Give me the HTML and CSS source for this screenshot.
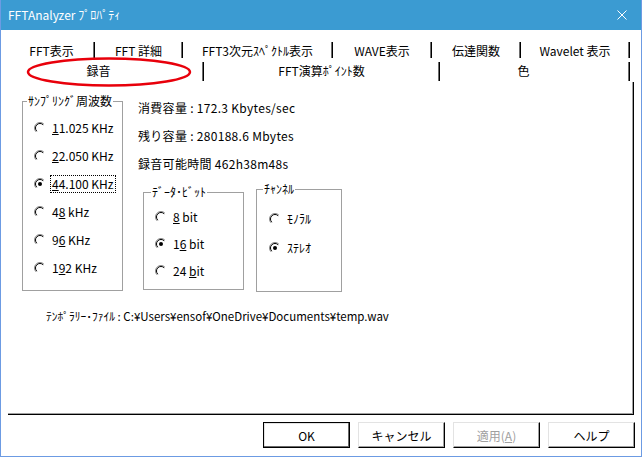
FILE: index.html
```html
<!DOCTYPE html>
<html lang="ja">
<head>
  <meta charset="UTF-8">
  <title>FFTAnalyzer ﾌﾟﾛﾊﾟﾃｨ</title>
  <link rel="stylesheet" href="styles.css">
</head>
<body>
  <svg class="defs">
    <symbol id="radio" viewBox="0 0 12 12">
      <path d="M2.1 9.9A5.5 5.5 0 0 1 9.9 2.1" stroke="#8a8a8a" fill="none"/>
      <path d="M2.8 9.2A4.5 4.5 0 0 1 9.2 2.8" stroke="#000" fill="none"/>
    </symbol>
    <symbol id="radio-on" viewBox="0 0 12 12">
      <path d="M2.1 9.9A5.5 5.5 0 0 1 9.9 2.1" stroke="#8a8a8a" fill="none"/>
      <path d="M2.8 9.2A4.5 4.5 0 0 1 9.2 2.8" stroke="#000" fill="none"/>
      <circle cx="6" cy="6" r="2" fill="#000"/>
    </symbol>
  </svg>

  <div class="window">
    <div class="titlebar">
      <span>FFTAnalyzer ﾌﾟﾛﾊﾟﾃｨ</span>
      <svg class="close" viewBox="0 0 10 10"><path d="M0.5 0.5L9.5 9.5M9.5 0.5L0.5 9.5" stroke="#fff"/></svg>
    </div>

    <!-- タブ 2段 -->
    <div class="tabs">
      <div class="tab-row row-back">
        <div class="tab w-fft">FFT表示</div>
        <div class="tab w-detail">FFT 詳細</div>
        <div class="tab w-3d">FFT3次元ｽﾍﾟｸﾄﾙ表示</div>
        <div class="tab w-wave">WAVE表示</div>
        <div class="tab w-trans">伝達関数</div>
        <div class="tab w-wavelet">Wavelet 表示</div>
      </div>
      <div class="tab-row row-front">
        <div class="tab w-rec">録音</div>
        <div class="tab w-points">FFT演算ﾎﾟｲﾝﾄ数</div>
        <div class="tab w-color">色</div>
      </div>
    </div>

    <div class="sheet">
      <div class="sheet-main">
        <fieldset class="group rate">
          <legend>ｻﾝﾌﾟﾘﾝｸﾞ周波数</legend>
          <div class="options">
            <div class="opt"><svg><use href="#radio"/></svg><span><u>1</u>1.025 KHz</span></div>
            <div class="opt"><svg><use href="#radio"/></svg><span><u>2</u>2.050 KHz</span></div>
            <div class="opt"><svg><use href="#radio-on"/></svg><span class="focus"><u>4</u>4.100 KHz</span></div>
            <div class="opt"><svg><use href="#radio"/></svg><span>4<u>8</u> kHz</span></div>
            <div class="opt"><svg><use href="#radio"/></svg><span>9<u>6</u> KHz</span></div>
            <div class="opt"><svg><use href="#radio"/></svg><span>1<u>9</u>2 KHz</span></div>
          </div>
        </fieldset>

        <div class="info">
          <p>消費容量 : 172.3 Kbytes/sec</p>
          <p>残り容量 : 280188.6 Mbytes</p>
          <p>録音可能時間 462h38m48s</p>
          <div class="subgroups">
            <fieldset class="group bits">
              <legend>ﾃﾞｰﾀ･ﾋﾞｯﾄ</legend>
              <div class="options">
                <div class="opt"><svg><use href="#radio"/></svg><span><u>8</u> bit</span></div>
                <div class="opt"><svg><use href="#radio-on"/></svg><span>1<u>6</u> bit</span></div>
                <div class="opt"><svg><use href="#radio"/></svg><span>24 <u>b</u>it</span></div>
              </div>
            </fieldset>
            <fieldset class="group chan">
              <legend>ﾁｬﾝﾈﾙ</legend>
              <div class="options">
                <div class="opt"><svg><use href="#radio"/></svg><span>ﾓﾉﾗﾙ</span></div>
                <div class="opt"><svg><use href="#radio-on"/></svg><span>ｽﾃﾚｵ</span></div>
              </div>
            </fieldset>
          </div>
        </div>
      </div>
      <p class="temp">ﾃﾝﾎﾟﾗﾘｰ･ﾌｧｲﾙ : C:¥Users¥ensof¥OneDrive¥Documents¥temp.wav</p>
    </div>

    <div class="buttons">
      <div class="btn default">OK</div>
      <div class="btn">キャンセル</div>
      <div class="btn disabled">適用(<u>A</u>)</div>
      <div class="btn">ヘルプ</div>
    </div>

    <!-- 赤丸 (注釈) -->
    <svg class="mark" viewBox="0 0 168 32"><ellipse cx="84" cy="16" rx="81" ry="13.5" fill="none" stroke="#e8000b" stroke-width="2.5"/></svg>
  </div>
</body>
</html>
```

FILE: styles.css
```css
body{
  margin: 0;
  font-family: "Noto Sans CJK JP", "Noto Sans", sans-serif;
  font-size: 12px;
  color: #000;
}
.defs{
  position: absolute;
  width: 0;
  height: 0;
}
.window{
  position: relative;
  width: 642px;
  height: 457px;
  box-sizing: border-box;
  border: 1px solid #6c9be3;
  border-top: none;
  background: #fff;
}
.titlebar{
  height: 30px;
  background: #3b9bd2;
  color: #fff;
  display: flex;
  align-items: center;
  justify-content: space-between;
  padding: 0 14px 0 7px;
  line-height: 16px;
}
.close{
  width: 10px;
  height: 10px;
}

/* tabs */
.tabs{
  margin-top: 10px;
}
.tab-row{
  display: flex;
}
.row-back{
  height: 22px;
  padding-left: 8px;
}
.row-back .tab{
  height: 16px;
  margin-top: 2px;
  line-height: 18px;
}
.row-front{
  height: 20px;
  padding-left: 7px;
}
.row-front .tab{
  height: 19px;
  line-height: 17px;
}
.tab{
  box-sizing: border-box;
  text-align: center;
  white-space: nowrap;
  border-right: 1px solid #000;
  box-shadow: inset -1px 0 0 #6d6d6d;
}
.w-fft{ width: 86px; }
.w-detail{ width: 88px; }
.w-3d{ width: 150px; }
.w-wave{ width: 99px; }
.w-trans{ width: 89px; }
.w-wavelet{ width: 109px; }
.w-rec{ width: 196px; padding-right: 14px; }
.w-points{ width: 236px; }
.w-color{ width: 190px; padding-right: 22px; }

/* sheet */
.sheet{
  margin-left: 7px;
  width: 626px;
  height: 333px;
  box-sizing: border-box;
  border-right: 1px solid #000;
  border-bottom: 1px solid #000;
  box-shadow: inset -1px -1px 0 #a0a0a0;
  padding: 12px 0 0 14px;
}
.sheet-main{
  display: flex;
  align-items: flex-start;
}
.group{
  margin: 0;
  padding: 0;
  border: 1px solid #a0a0a0;
  box-sizing: border-box;
  min-width: 0;
}
.group legend{
  padding: 0 1px;
  line-height: 14px;
  white-space: nowrap;
}
.opt{
  display: flex;
  align-items: center;
}
.opt svg{
  width: 12px;
  height: 12px;
  margin-right: 4px;
  flex: none;
}
.opt span{
  padding: 0 1px;
  border: 1px dotted transparent;
  line-height: 16px;
  white-space: nowrap;
}
.opt .focus{
  border-color: #000;
}

.rate{
  width: 101px;
  height: 197px;
}
.rate legend{
  margin-left: 4px;
}
.rate .options{
  padding: 6px 0 0 11px;
}
.rate .opt{
  height: 28px;
}

.info{
  margin-left: 15px;
}
.info p{
  margin: 0;
  height: 28px;
  line-height: 28px;
  white-space: nowrap;
  letter-spacing: 0.3px;
}
.subgroups{
  display: flex;
  align-items: flex-start;
  margin-left: 5px;
}
.bits{
  width: 101px;
  height: 105px;
  margin-top: 7px;
}
.bits legend{
  margin-left: 7px;
}
.bits .options{
  padding: 4px 0 0 11px;
}
.bits .opt{
  height: 27px;
}
.chan{
  width: 86px;
  height: 110px;
  margin-top: 4px;
  margin-left: 12px;
}
.chan legend{
  margin-left: 6px;
}
.chan .options{
  padding: 8px 0 0 12px;
}
.chan .opt{
  height: 29px;
}

.temp{
  margin: 16px 0 0 24px;
  line-height: 16px;
  font-size: 11.5px;
  white-space: nowrap;
}

/* buttons */
.buttons{
  display: flex;
  justify-content: flex-end;
  gap: 8px;
  margin-top: 7px;
  padding-right: 6px;
}
.btn{
  width: 87px;
  height: 26px;
  box-sizing: border-box;
  display: flex;
  align-items: center;
  justify-content: center;
  background: #fff;
  border: 1px solid;
  border-color: #e3e3e3 #000 #000 #e3e3e3;
  box-shadow: inset -1px -1px 0 #a0a0a0;
}
.btn.default{
  border-color: #000;
  box-shadow: inset -1px -1px 0 #696969, inset 1px 1px 0 #e3e3e3;
}
.btn.disabled{
  color: #a0a0a0;
}

.mark{
  position: absolute;
  left: 24px;
  top: 56px;
  width: 168px;
  height: 32px;
}
```
